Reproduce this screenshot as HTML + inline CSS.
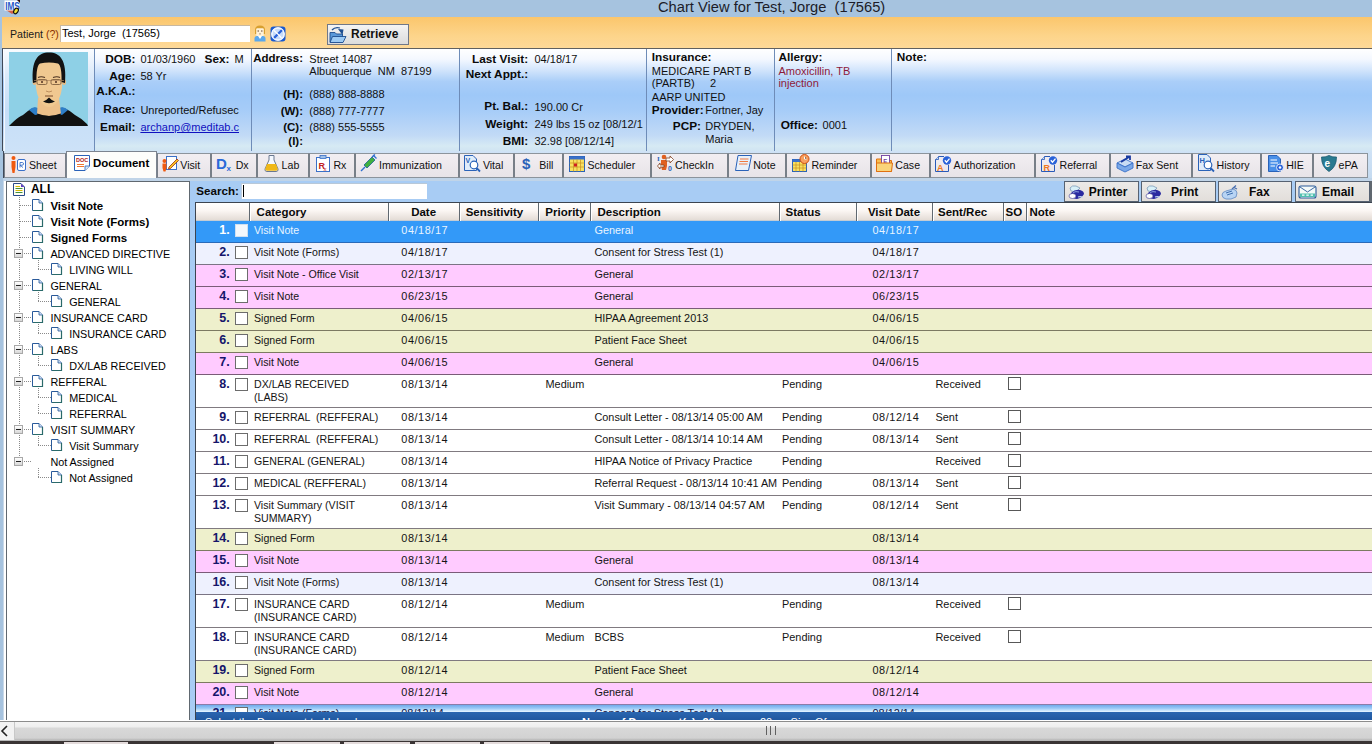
<!DOCTYPE html><html><head><meta charset="utf-8"><style>
*{margin:0;padding:0;box-sizing:border-box}
html,body{width:1372px;height:744px;overflow:hidden}
body{position:relative;background:#A6C3DF;font-family:"Liberation Sans",sans-serif;font-size:11px;color:#000}
.ab{position:absolute}
.t{position:absolute;white-space:pre}
svg{position:absolute;overflow:visible}
</style></head><body>
<div class="ab" style="left:0px;top:0px;width:1372px;height:17px;background:#A6C3DF"></div>
<svg style="left:3px;top:0px" width="18" height="16" viewBox="0 0 18 16"><path d="M3 10 L9 14 L15 10 Z" fill="#D06048"/><rect x="1.5" y="0.5" width="15" height="10" fill="#fff"/><text x="2.2" y="9.6" font-family="Liberation Sans" font-weight="bold" font-size="10.5" fill="#2858C8" transform="scale(0.78,1)" transform-origin="2.2 9.6">IMS</text><path d="M14 0 H17 V3 Z" fill="#301010"/><ellipse cx="13" cy="11" rx="2" ry="3" transform="rotate(35 13 11)" fill="#F0E030" stroke="#101010" stroke-width="1.1"/></svg>
<div class="t" style="left:658px;top:-0.79px;font-size:14.7px;line-height:16px;color:#1C1C28;">Chart View for Test, Jorge  (17565)</div>
<div class="ab" style="left:2px;top:17px;width:1370px;height:31px;background:linear-gradient(#FBC66C,#FDD48A 60%,#FED998)"></div>
<div class="t" style="left:10px;top:25.93px;font-size:10.6px;line-height:16px;color:#1A1A1A;">Patient <span style="color:#8A3000">(?)</span></div>
<div class="ab" style="left:60px;top:25px;width:190px;height:17px;background:#fff;border-top:1px solid #C8B8A0;border-left:1px solid #C8B8A0"></div>
<div class="t" style="left:62px;top:25.39px;font-size:11px;line-height:16px;color:#000;">Test, Jorge  (17565)</div>
<svg style="left:254px;top:25px" width="12" height="17" viewBox="0 0 12 17"><path d="M1 5 Q1 0.5 6 0.5 Q11 0.5 11 5 V9 H1 Z" fill="#D8A030"/><rect x="2.2" y="3.2" width="7.6" height="7.8" rx="1" fill="#FFF2D8"/><path d="M3.5 6 H5 M7 6 H8.5" stroke="#503020" stroke-width="0.9"/><path d="M5 8.5 L6 9.3 L7 8.5" fill="none" stroke="#806040" stroke-width="0.6"/><path d="M0.5 16.5 V13.5 Q0.5 11 3 11 H9 Q11.5 11 11.5 13.5 V16.5 Z" fill="#5AA8EC"/><path d="M4 11 L6 14 L8 11" fill="#fff"/></svg>
<svg style="left:270px;top:26px" width="16" height="16" viewBox="0 0 16 16"><rect x="0.5" y="0.5" width="15" height="15" rx="3" fill="#1A5AD0"/><circle cx="8" cy="8" r="6.2" fill="#C8DCFA" stroke="#F0F6FF" stroke-width="1.2"/><path d="M3.5 12.5 L12.5 3.5" stroke="#2A62D8" stroke-width="2.4"/><path d="M4 4.5 Q8 8 11.5 12" fill="none" stroke="#fff" stroke-width="1.2"/><circle cx="8" cy="8" r="6.2" fill="none" stroke="#F0F6FF" stroke-width="1.2"/></svg>
<div class="ab" style="left:327px;top:24px;width:82px;height:21px;background:linear-gradient(#F4F4F4,#DCDCDC);border:1px solid #707888;"></div>
<svg style="left:329px;top:26px" width="18" height="17" viewBox="0 0 18 17"><path d="M1 6.5 H6 L7.5 8 H13.5 V16 H1 Z" fill="#5A98D8" stroke="#1E4E90" stroke-width="0.9"/><path d="M3.5 10.5 H17 L14 16.5 H1 Z" fill="#9CCAF4" stroke="#1E4E90" stroke-width="0.9"/><path d="M3 4 Q6 0.5 11 2" fill="none" stroke="#1E4E90" stroke-width="1.3"/><path d="M9 3 L14.5 3.5 L13.5 9 Z" fill="#1E4E90"/></svg>
<div class="t" style="left:351px;top:26.34px;font-size:12px;line-height:16px;color:#101010;font-weight:bold;">Retrieve</div>
<div class="ab" style="left:2px;top:48px;width:1370px;height:103px;background:linear-gradient(#FFFFFF 0%,#F4F8FF 10%,#D4E6FC 20%,#AACEF8 32%,#9EC8F8 45%,#A6CCF8 60%,#C2DAF6 85%,#D6EAF4 95%,#D0E4F2 100%);border-top:1px solid #606060;border-left:1px solid #404858"></div>
<div class="ab" style="left:94px;top:49px;width:1px;height:102px;background:#6E8CB8"></div>
<div class="ab" style="left:251px;top:49px;width:1px;height:102px;background:#6E8CB8"></div>
<div class="ab" style="left:459px;top:49px;width:1px;height:102px;background:#6E8CB8"></div>
<div class="ab" style="left:646px;top:49px;width:1px;height:102px;background:#6E8CB8"></div>
<div class="ab" style="left:774px;top:49px;width:1px;height:102px;background:#6E8CB8"></div>
<div class="ab" style="left:891px;top:49px;width:1px;height:102px;background:#6E8CB8"></div>
<div class="ab" style="left:4px;top:49px;width:90px;height:102px;background:linear-gradient(#FAFCFF,#DCEAFA 25%,#C6DEF8 60%,#CDE2F8 100%);border-left:1px solid #F4F8FF"></div>
<svg style="left:9px;top:52px" width="79" height="74" viewBox="0 0 79 74"><rect width="79" height="74" fill="#8ED0E6"/>
<path d="M0 74 L2 72 Q8 66 12 64 L14 63 Q18 59 24 56 Q28 55 31 58 L48 58 Q51 55 55 56 Q62 59 66 63 Q72 66 78 72 L79 74 Z" fill="#111"/>
<path d="M20 58 Q24 54 29 56 L33 62 L26 63 Z" fill="#2E7EC8"/>
<path d="M59 58 Q55 54 50 56 L46 62 L53 63 Z" fill="#2E7EC8"/>
<path d="M29 46 L50 46 L52 62 Q40 66 28 62 Z" fill="#EDC08A"/>
<path d="M28 62 Q40 67 52 62" fill="none" stroke="#111" stroke-width="1.2"/>
<path d="M27 14 Q26 26 27 36 Q29 50 36 54 Q40 56 44 54 Q51 50 53 36 Q54 26 53 14 Q48 9 40 9 Q32 9 27 14 Z" fill="#F0C890"/>
<ellipse cx="25.5" cy="30" rx="2" ry="3" fill="#E8B880"/>
<ellipse cx="55" cy="30" rx="2" ry="3" fill="#E8B880"/>
<path d="M24 31 C22 8 29 0.5 40 0.5 C51 0.5 58 8 56 31 L52.5 30 Q53 14 49 11.5 Q40 9.5 31 11.5 Q27 14 27.5 30 Z" fill="#121212"/><path d="M29 25.5 Q32 24 36 25.5 M44 25.5 Q48 24 51 25.5" stroke="#4A3020" stroke-width="1.1" fill="none"/>
<path d="M25 28.5 H55" stroke="#B08860" stroke-width="0.7"/>
<rect x="28" y="27.5" width="10" height="5" rx="1.5" fill="none" stroke="#806040" stroke-width="0.9"/>
<rect x="42" y="27.5" width="10" height="5" rx="1.5" fill="none" stroke="#806040" stroke-width="0.9"/>
<circle cx="33" cy="30" r="1" fill="#503020"/><circle cx="47" cy="30" r="1" fill="#503020"/>
<path d="M37 39 Q40 41 43 39" fill="none" stroke="#B08050" stroke-width="0.8"/>
<path d="M36 44 H44" stroke="#7A4A2A" stroke-width="1"/>
<path d="M34 49.5 Q38 48 40 45.5 Q42 48 46 49.5 Q40 53 34 49.5 Z" fill="#111"/></svg>
<div class="t" style="left:75.5px;width:60px;text-align:right;top:50.51px;font-size:11.8px;line-height:16px;color:#0A0A0A;font-weight:bold;">DOB:</div>
<div class="t" style="left:140.4px;top:50.79px;font-size:11px;line-height:16px;color:#111;">01/03/1960</div>
<div class="t" style="left:169.5px;width:60px;text-align:right;top:50.51px;font-size:11.8px;line-height:16px;color:#0A0A0A;font-weight:bold;">Sex:</div>
<div class="t" style="left:234.4px;top:50.79px;font-size:11px;line-height:16px;color:#111;">M</div>
<div class="t" style="left:75.5px;width:60px;text-align:right;top:67.71px;font-size:11.8px;line-height:16px;color:#0A0A0A;font-weight:bold;">Age:</div>
<div class="t" style="left:140.4px;top:67.99px;font-size:11px;line-height:16px;color:#111;">58 Yr</div>
<div class="t" style="left:75.5px;width:60px;text-align:right;top:83.41px;font-size:11.8px;line-height:16px;color:#0A0A0A;font-weight:bold;">A.K.A.:</div>
<div class="t" style="left:75.5px;width:60px;text-align:right;top:101.31px;font-size:11.8px;line-height:16px;color:#0A0A0A;font-weight:bold;">Race:</div>
<div class="t" style="left:140.4px;top:101.59px;font-size:11px;line-height:16px;color:#111;">Unreported/Refusec</div>
<div class="t" style="left:75.5px;width:60px;text-align:right;top:119.11px;font-size:11.8px;line-height:16px;color:#0A0A0A;font-weight:bold;">Email:</div>
<div class="t" style="left:140.4px;top:119.39px;font-size:11px;line-height:16px;color:#111;"><span style="color:#1010C0;text-decoration:underline">archanp@meditab.c</span></div>
<div class="t" style="left:223px;width:80px;text-align:right;top:50.42px;font-size:11.5px;line-height:16px;color:#0A0A0A;font-weight:bold;">Address:</div>
<div class="t" style="left:309.3px;top:50.59px;font-size:11px;line-height:16px;color:#111;">Street 14087</div>
<div class="t" style="left:309.3px;top:63.49px;font-size:11px;line-height:16px;color:#111;">Albuquerque  NM  87199</div>
<div class="t" style="left:223px;width:80px;text-align:right;top:85.72px;font-size:11.5px;line-height:16px;color:#0A0A0A;font-weight:bold;">(H):</div>
<div class="t" style="left:309.3px;top:85.89px;font-size:11px;line-height:16px;color:#111;">(888) 888-8888</div>
<div class="t" style="left:223px;width:80px;text-align:right;top:102.62px;font-size:11.5px;line-height:16px;color:#0A0A0A;font-weight:bold;">(W):</div>
<div class="t" style="left:309.3px;top:102.79px;font-size:11px;line-height:16px;color:#111;">(888) 777-7777</div>
<div class="t" style="left:223px;width:80px;text-align:right;top:118.62px;font-size:11.5px;line-height:16px;color:#0A0A0A;font-weight:bold;">(C):</div>
<div class="t" style="left:309.3px;top:118.79px;font-size:11px;line-height:16px;color:#111;">(888) 555-5555</div>
<div class="t" style="left:223px;width:80px;text-align:right;top:133.02px;font-size:11.5px;line-height:16px;color:#0A0A0A;font-weight:bold;">(I):</div>
<div class="t" style="left:438.20000000000005px;width:90px;text-align:right;top:51.01px;font-size:11.8px;line-height:16px;color:#0A0A0A;font-weight:bold;">Last Visit:</div>
<div class="t" style="left:534.5px;top:51.29px;font-size:11px;line-height:16px;color:#111;">04/18/17</div>
<div class="t" style="left:438.20000000000005px;width:90px;text-align:right;top:65.91px;font-size:11.8px;line-height:16px;color:#0A0A0A;font-weight:bold;">Next Appt.:</div>
<div class="t" style="left:438.20000000000005px;width:90px;text-align:right;top:98.41px;font-size:11.8px;line-height:16px;color:#0A0A0A;font-weight:bold;">Pt. Bal.:</div>
<div class="t" style="left:534.5px;top:98.69px;font-size:11px;line-height:16px;color:#111;">190.00 Cr</div>
<div class="t" style="left:438.20000000000005px;width:90px;text-align:right;top:115.61px;font-size:11.8px;line-height:16px;color:#0A0A0A;font-weight:bold;">Weight:</div>
<div class="t" style="left:534.5px;top:115.89px;font-size:11px;line-height:16px;color:#111;">249 lbs 15 oz [08/12/1</div>
<div class="t" style="left:438.20000000000005px;width:90px;text-align:right;top:132.81px;font-size:11.8px;line-height:16px;color:#0A0A0A;font-weight:bold;">BMI:</div>
<div class="t" style="left:534.5px;top:133.09px;font-size:11px;line-height:16px;color:#111;">32.98 [08/12/14]</div>
<div class="t" style="left:651.8px;top:48.61px;font-size:11.8px;line-height:16px;color:#0A0A0A;font-weight:bold;">Insurance:</div>
<div class="t" style="left:651.8px;top:62.69px;font-size:11px;line-height:16px;color:#111;">MEDICARE PART B</div>
<div class="t" style="left:651.8px;top:75.49px;font-size:11px;line-height:16px;color:#111;">(PARTB)     2</div>
<div class="t" style="left:651.8px;top:88.69px;font-size:11px;line-height:16px;color:#111;">AARP UNITED</div>
<div class="t" style="left:651.8px;top:101.81px;font-size:11.8px;line-height:16px;color:#0A0A0A;font-weight:bold;">Provider:</div>
<div class="t" style="left:705.3px;top:102.09px;font-size:11px;line-height:16px;color:#111;">Fortner, Jay</div>
<div class="t" style="left:641px;width:60px;text-align:right;top:117.51px;font-size:11.8px;line-height:16px;color:#0A0A0A;font-weight:bold;">PCP:</div>
<div class="t" style="left:705.3px;top:117.79px;font-size:11px;line-height:16px;color:#111;">DRYDEN,</div>
<div class="t" style="left:705.3px;top:130.59px;font-size:11px;line-height:16px;color:#111;">Maria</div>
<div class="t" style="left:778.4px;top:48.61px;font-size:11.8px;line-height:16px;color:#0A0A0A;font-weight:bold;">Allergy:</div>
<div class="t" style="left:778.4px;top:62.69px;font-size:11px;line-height:16px;color:#8E1A3A;">Amoxicillin, TB</div>
<div class="t" style="left:778.4px;top:75.49px;font-size:11px;line-height:16px;color:#8E1A3A;">injection</div>
<div class="t" style="left:780.7px;top:116.51px;font-size:11.8px;line-height:16px;color:#0A0A0A;font-weight:bold;">Office:</div>
<div class="t" style="left:822.6px;top:116.79px;font-size:11px;line-height:16px;color:#111;">0001</div>
<div class="t" style="left:896.8px;top:48.61px;font-size:11.8px;line-height:16px;color:#0A0A0A;font-weight:bold;">Note:</div>
<div class="ab" style="left:3px;top:151px;width:1369px;height:30px;background:linear-gradient(#CFE2F6,#C4DAF0)"></div>
<div class="ab" style="left:3px;top:151px;width:1px;height:27px;background:#404858"></div>
<div class="ab" style="left:4px;top:153px;width:62px;height:25px;background:linear-gradient(#F2EEF2,#E8E4E8);border:1px solid #8C949C;border-left-color:#787F88;border-right-color:#787F88"></div>
<div class="ab" style="left:157px;top:153px;width:54px;height:25px;background:linear-gradient(#F2EEF2,#E8E4E8);border:1px solid #8C949C;border-left-color:#787F88;border-right-color:#787F88"></div>
<div class="ab" style="left:211px;top:153px;width:46px;height:25px;background:linear-gradient(#F2EEF2,#E8E4E8);border:1px solid #8C949C;border-left-color:#787F88;border-right-color:#787F88"></div>
<div class="ab" style="left:257px;top:153px;width:52px;height:25px;background:linear-gradient(#F2EEF2,#E8E4E8);border:1px solid #8C949C;border-left-color:#787F88;border-right-color:#787F88"></div>
<div class="ab" style="left:309px;top:153px;width:46px;height:25px;background:linear-gradient(#F2EEF2,#E8E4E8);border:1px solid #8C949C;border-left-color:#787F88;border-right-color:#787F88"></div>
<div class="ab" style="left:355px;top:153px;width:104px;height:25px;background:linear-gradient(#F2EEF2,#E8E4E8);border:1px solid #8C949C;border-left-color:#787F88;border-right-color:#787F88"></div>
<div class="ab" style="left:459px;top:153px;width:55px;height:25px;background:linear-gradient(#F2EEF2,#E8E4E8);border:1px solid #8C949C;border-left-color:#787F88;border-right-color:#787F88"></div>
<div class="ab" style="left:514px;top:153px;width:49px;height:25px;background:linear-gradient(#F2EEF2,#E8E4E8);border:1px solid #8C949C;border-left-color:#787F88;border-right-color:#787F88"></div>
<div class="ab" style="left:563px;top:153px;width:88px;height:25px;background:linear-gradient(#F2EEF2,#E8E4E8);border:1px solid #8C949C;border-left-color:#787F88;border-right-color:#787F88"></div>
<div class="ab" style="left:651px;top:153px;width:77px;height:25px;background:linear-gradient(#F2EEF2,#E8E4E8);border:1px solid #8C949C;border-left-color:#787F88;border-right-color:#787F88"></div>
<div class="ab" style="left:728px;top:153px;width:58px;height:25px;background:linear-gradient(#F2EEF2,#E8E4E8);border:1px solid #8C949C;border-left-color:#787F88;border-right-color:#787F88"></div>
<div class="ab" style="left:786px;top:153px;width:85px;height:25px;background:linear-gradient(#F2EEF2,#E8E4E8);border:1px solid #8C949C;border-left-color:#787F88;border-right-color:#787F88"></div>
<div class="ab" style="left:871px;top:153px;width:59px;height:25px;background:linear-gradient(#F2EEF2,#E8E4E8);border:1px solid #8C949C;border-left-color:#787F88;border-right-color:#787F88"></div>
<div class="ab" style="left:930px;top:153px;width:105px;height:25px;background:linear-gradient(#F2EEF2,#E8E4E8);border:1px solid #8C949C;border-left-color:#787F88;border-right-color:#787F88"></div>
<div class="ab" style="left:1035px;top:153px;width:75px;height:25px;background:linear-gradient(#F2EEF2,#E8E4E8);border:1px solid #8C949C;border-left-color:#787F88;border-right-color:#787F88"></div>
<div class="ab" style="left:1110px;top:153px;width:82px;height:25px;background:linear-gradient(#F2EEF2,#E8E4E8);border:1px solid #8C949C;border-left-color:#787F88;border-right-color:#787F88"></div>
<div class="ab" style="left:1192px;top:153px;width:69px;height:25px;background:linear-gradient(#F2EEF2,#E8E4E8);border:1px solid #8C949C;border-left-color:#787F88;border-right-color:#787F88"></div>
<div class="ab" style="left:1261px;top:153px;width:52px;height:25px;background:linear-gradient(#F2EEF2,#E8E4E8);border:1px solid #8C949C;border-left-color:#787F88;border-right-color:#787F88"></div>
<div class="ab" style="left:1313px;top:153px;width:55px;height:25px;background:linear-gradient(#F2EEF2,#E8E4E8);border:1px solid #8C949C;border-left-color:#787F88;border-right-color:#787F88"></div>
<div class="ab" style="left:1367px;top:153px;width:1px;height:25px;background:#8C949C"></div>
<div class="ab" style="left:66px;top:151px;width:91px;height:28px;background:#FDFDFB;border:1px solid #7C8490;border-bottom:none"></div>
<div class="ab" style="left:3px;top:178px;width:1369px;height:3px;background:#C0D4E8"></div>
<div class="ab" style="left:66px;top:178px;width:91px;height:3px;background:#C0D4E8"></div>
<div class="t" style="left:29px;top:156.93px;font-size:10.6px;line-height:16px;color:#101010;">Sheet</div>
<div class="t" style="left:93px;top:154.92px;font-size:11.5px;line-height:16px;color:#000;font-weight:bold;">Document</div>
<div class="t" style="left:180.3px;top:156.93px;font-size:10.6px;line-height:16px;color:#101010;">Visit</div>
<div class="t" style="left:235.7px;top:156.93px;font-size:10.6px;line-height:16px;color:#101010;">Dx</div>
<div class="t" style="left:281.6px;top:156.93px;font-size:10.6px;line-height:16px;color:#101010;">Lab</div>
<div class="t" style="left:333.4px;top:156.93px;font-size:10.6px;line-height:16px;color:#101010;">Rx</div>
<div class="t" style="left:379px;top:156.93px;font-size:10.6px;line-height:16px;color:#101010;">Immunization</div>
<div class="t" style="left:482.9px;top:156.93px;font-size:10.6px;line-height:16px;color:#101010;">Vital</div>
<div class="t" style="left:539.3px;top:156.93px;font-size:10.6px;line-height:16px;color:#101010;">Bill</div>
<div class="t" style="left:587.5px;top:156.93px;font-size:10.6px;line-height:16px;color:#101010;">Scheduler</div>
<div class="t" style="left:675.1px;top:156.93px;font-size:10.6px;line-height:16px;color:#101010;">CheckIn</div>
<div class="t" style="left:753.2px;top:156.93px;font-size:10.6px;line-height:16px;color:#101010;">Note</div>
<div class="t" style="left:811.4px;top:156.93px;font-size:10.6px;line-height:16px;color:#101010;">Reminder</div>
<div class="t" style="left:895.3px;top:156.93px;font-size:10.6px;line-height:16px;color:#101010;">Case</div>
<div class="t" style="left:953.6px;top:156.93px;font-size:10.6px;line-height:16px;color:#101010;">Authorization</div>
<div class="t" style="left:1059.5px;top:156.93px;font-size:10.6px;line-height:16px;color:#101010;">Referral</div>
<div class="t" style="left:1135.7px;top:156.93px;font-size:10.6px;line-height:16px;color:#101010;">Fax Sent</div>
<div class="t" style="left:1216.5px;top:156.93px;font-size:10.6px;line-height:16px;color:#101010;">History</div>
<div class="t" style="left:1286.2px;top:156.93px;font-size:10.6px;line-height:16px;color:#101010;">HIE</div>
<div class="t" style="left:1338.6px;top:156.93px;font-size:10.6px;line-height:16px;color:#101010;">ePA</div>
<svg style="left:11px;top:156px" width="16" height="18" viewBox="0 0 16 18"><circle cx="2.5" cy="2" r="2" fill="#F05A10"/><path d="M0.5 5 H4.5 V11 L3.5 17 H1.5 L0.5 11 Z" fill="#F05A10"/><rect x="6.5" y="3.5" width="8" height="11" rx="1.5" fill="#fff" stroke="#3A70C8" stroke-width="1"/><path d="M9 11.5 V6.5 H11.5 Q12.5 6.5 12.5 8 Q12.5 9.2 11 9.2 H9 L12 11.5" fill="none" stroke="#3A70C8" stroke-width="0.9"/></svg>
<svg style="left:74px;top:155px" width="17" height="17" viewBox="0 0 17 17"><path d="M0.5 0.5 H15.5 V11 L11 15.5 H0.5 Z" fill="#fff" stroke="#2A62B8" stroke-width="1"/><path d="M15.5 11 H11 V15.5" fill="#D8E8F8" stroke="#2A62B8" stroke-width="0.8"/><text x="2" y="7" font-family="Liberation Sans" font-weight="bold" font-size="5.5" fill="#B02020">DOC</text><path d="M3 9.5 H10 M3 11.5 H10" stroke="#F07830" stroke-width="1"/></svg>
<svg style="left:162px;top:155px" width="17" height="17" viewBox="0 0 17 17"><rect x="4.5" y="1.5" width="10" height="13" fill="#fff" stroke="#3A70C8" stroke-width="1"/><circle cx="2.5" cy="6" r="2" fill="#F05A10"/><path d="M0.5 8.5 H4.5 V13 L3.5 16.5 H1.5 L0.5 13 Z" fill="#F05A10"/><path d="M7 12 L15 4 L16.5 5.5 L8.5 13.5 L6.5 14 Z" fill="#F8C020" stroke="#A03010" stroke-width="0.8"/></svg>
<svg style="left:216px;top:156px" width="17" height="16" viewBox="0 0 17 16"><text x="0" y="13" font-family="Liberation Sans" font-weight="bold" font-size="15" fill="#2A6AD8">D</text><text x="10.5" y="15" font-family="Liberation Sans" font-weight="bold" font-size="8" fill="#2A6AD8">x</text></svg>
<svg style="left:264px;top:155px" width="15" height="17" viewBox="0 0 15 17"><path d="M5 0.5 H10 V5 L14 14 Q14.5 16.5 12 16.5 H3 Q0.5 16.5 1 14 L5 5 Z" fill="#F4F8FF" stroke="#6A7890" stroke-width="1"/><path d="M3 9 H12 L13.8 14 Q14 15.8 12 15.8 H3 Q1 15.8 1.2 14 Z" fill="#F0B818"/></svg>
<svg style="left:316px;top:155px" width="15" height="17" viewBox="0 0 15 17"><rect x="0.5" y="2.5" width="13" height="14" fill="#fff" stroke="#3A70C8" stroke-width="1"/><rect x="4" y="0.5" width="6" height="3" fill="#A0C0E8" stroke="#3A70C8" stroke-width="0.8"/><text x="2.5" y="14" font-family="Liberation Sans" font-weight="bold" font-size="9" fill="#C02020">R</text><text x="7.5" y="15.5" font-family="Liberation Sans" font-size="6" fill="#C02020">x</text></svg>
<svg style="left:360px;top:154px" width="17" height="18" viewBox="0 0 17 18"><path d="M1 17 L5 13" stroke="#3070D0" stroke-width="1.5"/><path d="M4 11 L12 3 L15 6 L7 14 Z" fill="#40B040" stroke="#2A6A9A" stroke-width="0.9"/><path d="M12 3 L15 0.5 M13 1 L16.5 4.5" stroke="#3070D0" stroke-width="1.3"/></svg>
<svg style="left:464px;top:155px" width="17" height="17" viewBox="0 0 17 17"><path d="M0.5 0.5 H9 L12.5 4 V15.5 H0.5 Z" fill="#E0ECFA" stroke="#2A62B8" stroke-width="1"/><text x="1.5" y="8" font-family="Liberation Sans" font-weight="bold" font-size="7" fill="#2A62B8">V</text><circle cx="10" cy="10" r="3.8" fill="#fff" stroke="#2A62B8" stroke-width="1.2"/><path d="M12.5 13 L16 16.5" stroke="#2A62B8" stroke-width="1.8"/></svg>
<svg style="left:522px;top:155px" width="13" height="17" viewBox="0 0 13 17"><text x="0" y="14" font-family="Liberation Sans" font-weight="bold" font-size="15" fill="#2A62B8">$</text></svg>
<svg style="left:569px;top:155px" width="16" height="17" viewBox="0 0 16 17"><rect x="0.5" y="1.5" width="15" height="15" fill="#F8E060" stroke="#2A62B8" stroke-width="1"/><rect x="0.5" y="1.5" width="15" height="3" fill="#3A70C8"/><path d="M0.5 8 H15.5 M0.5 12 H15.5 M4.5 4.5 V16.5 M8 4.5 V16.5 M11.5 4.5 V16.5" stroke="#C89020" stroke-width="0.7"/><rect x="5" y="8.5" width="3" height="3" fill="#D02020"/></svg>
<svg style="left:657px;top:154px" width="17" height="18" viewBox="0 0 17 18"><text x="0" y="7" font-family="Liberation Serif" font-weight="bold" font-size="7" fill="#2A62B8">I</text><text x="11" y="17" font-family="Liberation Sans" font-weight="bold" font-size="7" fill="#2A62B8">0</text><circle cx="7" cy="3" r="2.3" fill="#E06020"/><path d="M4 6 H10 V12 L9 16 H5 L4 12 Z" fill="#E06020"/><path d="M9 4 H13 V2 L16.5 5.5 L13 9 V7 H9 Z" fill="#fff" stroke="#804020" stroke-width="0.8"/><path d="M7 13 H3 V15 L0.5 12 L3 9 V11 H7 Z" fill="#fff" stroke="#804020" stroke-width="0.8"/></svg>
<svg style="left:735px;top:155px" width="17" height="17" viewBox="0 0 17 17"><path d="M3 0.5 H16.5 L13.5 15.5 H0.5 Z" fill="#E8F0FA" stroke="#2A62B8" stroke-width="1"/><path d="M5 4 H13.5 M4.5 6.5 H13 M4 9 H12.5" stroke="#F07840" stroke-width="1.1"/></svg>
<svg style="left:792px;top:154px" width="18" height="18" viewBox="0 0 18 18"><rect x="0.5" y="5.5" width="14" height="12" fill="#F8E060" stroke="#2A62B8" stroke-width="1"/><rect x="0.5" y="5.5" width="14" height="2.5" fill="#3A70C8"/><path d="M0.5 11 H14.5 M0.5 14 H14.5 M4 8 V17.5 M7.5 8 V17.5 M11 8 V17.5" stroke="#C89020" stroke-width="0.7"/><circle cx="12.5" cy="5" r="4.5" fill="#F8A060" stroke="#D05010" stroke-width="1"/><path d="M12.5 2.5 V5 H14.5" stroke="#fff" stroke-width="1"/></svg>
<svg style="left:876px;top:155px" width="17" height="17" viewBox="0 0 17 17"><path d="M0.5 4 H6 L7.5 5.5 H15.5 V16.5 H0.5 Z" fill="#F8C050" stroke="#E07010" stroke-width="1"/><rect x="5.5" y="0.5" width="8" height="9" fill="#fff" stroke="#7040A0" stroke-width="0.9"/><text x="7.2" y="7.5" font-family="Liberation Sans" font-weight="bold" font-size="6" fill="#7040A0">E</text><path d="M0.5 8 H16.5 L15.5 16.5 H0.5 Z" fill="#FAD47A" stroke="#E07010" stroke-width="1"/></svg>
<svg style="left:935px;top:156px" width="17" height="17" viewBox="0 0 17 17"><path d="M3.5 0.5 H9 M3.5 0.5 L0.5 3.5 V15.5 H13.5 V9" fill="none" stroke="#2A5AB8" stroke-width="1"/><path d="M0.5 3.5 H3.5 V0.5" fill="#C8DCF8" stroke="#2A5AB8" stroke-width="0.8"/><text x="2" y="14.5" font-family="Liberation Sans" font-weight="bold" font-size="9" fill="#F07820">A</text><circle cx="12" cy="4.5" r="4.2" fill="#2A62D8"/><path d="M9.8 4.3 L11.5 6.2 L14.5 2.6" fill="none" stroke="#fff" stroke-width="1.3"/></svg>
<svg style="left:1041px;top:156px" width="17" height="17" viewBox="0 0 17 17"><path d="M3.5 0.5 H9 M3.5 0.5 L0.5 3.5 V15.5 H13.5 V9" fill="none" stroke="#2A5AB8" stroke-width="1"/><path d="M0.5 3.5 H3.5 V0.5" fill="#C8DCF8" stroke="#2A5AB8" stroke-width="0.8"/><text x="2.5" y="14.5" font-family="Liberation Sans" font-weight="bold" font-size="9" fill="#F07820">R</text><circle cx="12" cy="4.5" r="4.2" fill="#2A62D8"/><path d="M9.8 4.3 L11.5 6.2 L14.5 2.6" fill="none" stroke="#fff" stroke-width="1.3"/></svg>
<svg style="left:1116px;top:155px" width="18" height="18" viewBox="0 0 18 18"><path d="M1 8 L9 4 L17 8 L9 12 Z" fill="#C8DCF4" stroke="#3A70C8" stroke-width="0.9"/><path d="M1 8 V13 L9 17 L17 13 V8 L9 12 Z" fill="#7AA8E8" stroke="#3A70C8" stroke-width="0.9"/><path d="M5 7 L13 2 M10 1.5 H14 V5" fill="none" stroke="#1A3AA0" stroke-width="1.8"/></svg>
<svg style="left:1198px;top:154px" width="17" height="18" viewBox="0 0 17 18"><path d="M0.5 0.5 H9 L12.5 4 V16.5 H0.5 Z" fill="#E0ECFA" stroke="#2A62B8" stroke-width="1"/><text x="1.5" y="8.5" font-family="Liberation Sans" font-weight="bold" font-size="7.5" fill="#2A62B8">H</text><circle cx="10" cy="11" r="3.8" fill="#fff" stroke="#2A62B8" stroke-width="1.2"/><path d="M12.5 14 L16 17.5" stroke="#2A62B8" stroke-width="1.8"/></svg>
<svg style="left:1268px;top:155px" width="16" height="17" viewBox="0 0 16 17"><path d="M0.5 0.5 H9 L12.5 4 V16.5 H0.5 Z" fill="#4A90E8" stroke="#2A62B8" stroke-width="1"/><path d="M2.5 5 H9 M2.5 8 H10 M2.5 11 H7" stroke="#fff" stroke-width="1.2"/><circle cx="12" cy="12.5" r="3.5" fill="#2A62D8" stroke="#fff" stroke-width="0.8"/><circle cx="12" cy="12.5" r="1.3" fill="#fff"/></svg>
<svg style="left:1321px;top:155px" width="16" height="17" viewBox="0 0 16 17"><path d="M8 0.5 Q12 2.5 15.5 2 Q15.5 12 8 16.5 Q0.5 12 0.5 2 Q4 2.5 8 0.5 Z" fill="#2A7A90" stroke="#1A5A70" stroke-width="0.8"/><text x="3.5" y="12" font-family="Liberation Sans" font-weight="bold" font-size="10" fill="#fff">e</text></svg>
<div class="ab" style="left:3px;top:181px;width:187px;height:540px;background:#fff;border-left:1px solid #C8D8E8"></div>
<div class="ab" style="left:6px;top:181px;width:184px;height:540px;background:#fff;border:1px solid #606870;border-bottom:none"></div>
<div class="ab" style="left:190px;top:181px;width:1182px;height:540px;background:#A8CCF4"></div>
<div class="ab" style="left:190px;top:181px;width:5px;height:540px;background:#A8CCF4"></div>
<div class="t" style="left:196.3px;top:182.68px;font-size:11.6px;line-height:16px;color:#0A0A0A;font-weight:bold;">Search:</div>
<div class="ab" style="left:241px;top:183px;width:186px;height:16px;background:#fff;border-left:1px solid #C0D0E0;border-top:1px solid #B8C8D8"></div>
<div class="ab" style="left:243px;top:185px;width:1px;height:12px;background:#000"></div>
<div class="ab" style="left:195px;top:202px;width:1177px;height:519px;background:#fff;border-left:1px solid #3C4450;border-top:1px solid #3C4450"></div>
<div class="ab" style="left:196px;top:203px;width:1176px;height:18px;background:linear-gradient(#FFFFFF,#FBF6F3 45%,#E4DCD6);border-bottom:1px solid #C4CCD4"></div>
<div class="ab" style="left:249px;top:203px;width:1px;height:18px;background:#606870"></div>
<div class="ab" style="left:250px;top:203px;width:1px;height:18px;background:#FFFFFF"></div>
<div class="ab" style="left:388px;top:203px;width:1px;height:18px;background:#606870"></div>
<div class="ab" style="left:389px;top:203px;width:1px;height:18px;background:#FFFFFF"></div>
<div class="ab" style="left:459px;top:203px;width:1px;height:18px;background:#606870"></div>
<div class="ab" style="left:460px;top:203px;width:1px;height:18px;background:#FFFFFF"></div>
<div class="ab" style="left:538px;top:203px;width:1px;height:18px;background:#606870"></div>
<div class="ab" style="left:539px;top:203px;width:1px;height:18px;background:#FFFFFF"></div>
<div class="ab" style="left:590px;top:203px;width:1px;height:18px;background:#606870"></div>
<div class="ab" style="left:591px;top:203px;width:1px;height:18px;background:#FFFFFF"></div>
<div class="ab" style="left:779px;top:203px;width:1px;height:18px;background:#606870"></div>
<div class="ab" style="left:780px;top:203px;width:1px;height:18px;background:#FFFFFF"></div>
<div class="ab" style="left:856px;top:203px;width:1px;height:18px;background:#606870"></div>
<div class="ab" style="left:857px;top:203px;width:1px;height:18px;background:#FFFFFF"></div>
<div class="ab" style="left:932px;top:203px;width:1px;height:18px;background:#606870"></div>
<div class="ab" style="left:933px;top:203px;width:1px;height:18px;background:#FFFFFF"></div>
<div class="ab" style="left:1003px;top:203px;width:1px;height:18px;background:#606870"></div>
<div class="ab" style="left:1004px;top:203px;width:1px;height:18px;background:#FFFFFF"></div>
<div class="ab" style="left:1026px;top:203px;width:1px;height:18px;background:#606870"></div>
<div class="ab" style="left:1027px;top:203px;width:1px;height:18px;background:#FFFFFF"></div>
<div class="t" style="left:256.6px;top:203.52px;font-size:11.5px;line-height:16px;color:#0A0A0A;font-weight:bold;">Category</div>
<div class="t" style="left:383.6px;width:80px;text-align:center;top:203.52px;font-size:11.5px;line-height:16px;color:#0A0A0A;font-weight:bold;">Date</div>
<div class="t" style="left:465.7px;top:203.52px;font-size:11.5px;line-height:16px;color:#0A0A0A;font-weight:bold;">Sensitivity</div>
<div class="t" style="left:545.3px;top:203.52px;font-size:11.5px;line-height:16px;color:#0A0A0A;font-weight:bold;">Priority</div>
<div class="t" style="left:597.5px;top:203.52px;font-size:11.5px;line-height:16px;color:#0A0A0A;font-weight:bold;">Description</div>
<div class="t" style="left:785.5px;top:203.52px;font-size:11.5px;line-height:16px;color:#0A0A0A;font-weight:bold;">Status</div>
<div class="t" style="left:854.0px;width:80px;text-align:center;top:203.52px;font-size:11.5px;line-height:16px;color:#0A0A0A;font-weight:bold;">Visit Date</div>
<div class="t" style="left:938px;top:203.52px;font-size:11.5px;line-height:16px;color:#0A0A0A;font-weight:bold;">Sent/Rec</div>
<div class="t" style="left:1005.5px;top:203.52px;font-size:11.5px;line-height:16px;color:#0A0A0A;font-weight:bold;">SO</div>
<div class="t" style="left:1029.5px;top:203.52px;font-size:11.5px;line-height:16px;color:#0A0A0A;font-weight:bold;">Note</div>
<div class="ab" style="left:196px;top:221px;width:1176px;height:22px;background:#3399F8;border-bottom:1px solid #2A6AB8"></div>
<div class="t" style="left:199.8px;width:30px;text-align:right;top:221.97px;font-size:12.5px;line-height:16px;color:#FFFFFF;font-weight:bold;">1.</div>
<div class="ab" style="left:235px;top:224px;width:13px;height:13px;background:#F4F8FC;border:1px solid #D0E0F0"></div>
<div class="t" style="left:254px;top:222.33px;font-size:10.6px;line-height:16px;color:#E8F4FF;">Visit Note</div>
<div class="t" style="left:401.3px;top:222.22px;font-size:10.9px;line-height:16px;color:#E8F4FF;letter-spacing:0.55px">04/18/17</div>
<div class="t" style="left:594.5px;top:222.24px;font-size:10.85px;line-height:16px;color:#E8F4FF;">General</div>
<div class="t" style="left:872.5px;top:222.22px;font-size:10.9px;line-height:16px;color:#E8F4FF;letter-spacing:0.55px">04/18/17</div>
<div class="ab" style="left:196px;top:243px;width:1176px;height:22px;background:#EEF1FE;border-bottom:1px solid #7A7484"></div>
<div class="t" style="left:199.8px;width:30px;text-align:right;top:243.97px;font-size:12.5px;line-height:16px;color:#15156A;font-weight:bold;">2.</div>
<div class="ab" style="left:235px;top:246px;width:13px;height:13px;background:#fff;border:1px solid #6C6C6C"></div>
<div class="t" style="left:254px;top:244.33px;font-size:10.6px;line-height:16px;color:#141414;">Visit Note (Forms)</div>
<div class="t" style="left:401.3px;top:244.22px;font-size:10.9px;line-height:16px;color:#141414;letter-spacing:0.55px">04/18/17</div>
<div class="t" style="left:594.5px;top:244.24px;font-size:10.85px;line-height:16px;color:#141414;">Consent for Stress Test (1)</div>
<div class="t" style="left:872.5px;top:244.22px;font-size:10.9px;line-height:16px;color:#141414;letter-spacing:0.55px">04/18/17</div>
<div class="ab" style="left:196px;top:265px;width:1176px;height:22px;background:#FFCBFF;border-bottom:1px solid #7A5C78"></div>
<div class="t" style="left:199.8px;width:30px;text-align:right;top:265.97px;font-size:12.5px;line-height:16px;color:#15156A;font-weight:bold;">3.</div>
<div class="ab" style="left:235px;top:268px;width:13px;height:13px;background:#fff;border:1px solid #6C6C6C"></div>
<div class="t" style="left:254px;top:266.33px;font-size:10.6px;line-height:16px;color:#141414;">Visit Note - Office Visit</div>
<div class="t" style="left:401.3px;top:266.22px;font-size:10.9px;line-height:16px;color:#141414;letter-spacing:0.55px">02/13/17</div>
<div class="t" style="left:594.5px;top:266.24px;font-size:10.85px;line-height:16px;color:#141414;">General</div>
<div class="t" style="left:872.5px;top:266.22px;font-size:10.9px;line-height:16px;color:#141414;letter-spacing:0.55px">02/13/17</div>
<div class="ab" style="left:196px;top:287px;width:1176px;height:22px;background:#FFCBFF;border-bottom:1px solid #7A5C78"></div>
<div class="t" style="left:199.8px;width:30px;text-align:right;top:287.97px;font-size:12.5px;line-height:16px;color:#15156A;font-weight:bold;">4.</div>
<div class="ab" style="left:235px;top:290px;width:13px;height:13px;background:#fff;border:1px solid #6C6C6C"></div>
<div class="t" style="left:254px;top:288.33px;font-size:10.6px;line-height:16px;color:#141414;">Visit Note</div>
<div class="t" style="left:401.3px;top:288.22px;font-size:10.9px;line-height:16px;color:#141414;letter-spacing:0.55px">06/23/15</div>
<div class="t" style="left:594.5px;top:288.24px;font-size:10.85px;line-height:16px;color:#141414;">General</div>
<div class="t" style="left:872.5px;top:288.22px;font-size:10.9px;line-height:16px;color:#141414;letter-spacing:0.55px">06/23/15</div>
<div class="ab" style="left:196px;top:309px;width:1176px;height:22px;background:#EEF0CC;border-bottom:1px solid #7C7A62"></div>
<div class="t" style="left:199.8px;width:30px;text-align:right;top:309.97px;font-size:12.5px;line-height:16px;color:#15156A;font-weight:bold;">5.</div>
<div class="ab" style="left:235px;top:312px;width:13px;height:13px;background:#fff;border:1px solid #6C6C6C"></div>
<div class="t" style="left:254px;top:310.33px;font-size:10.6px;line-height:16px;color:#141414;">Signed Form</div>
<div class="t" style="left:401.3px;top:310.22px;font-size:10.9px;line-height:16px;color:#141414;letter-spacing:0.55px">04/06/15</div>
<div class="t" style="left:594.5px;top:310.24px;font-size:10.85px;line-height:16px;color:#141414;">HIPAA Agreement 2013</div>
<div class="t" style="left:872.5px;top:310.22px;font-size:10.9px;line-height:16px;color:#141414;letter-spacing:0.55px">04/06/15</div>
<div class="ab" style="left:196px;top:331px;width:1176px;height:22px;background:#EEF0CC;border-bottom:1px solid #7C7A62"></div>
<div class="t" style="left:199.8px;width:30px;text-align:right;top:331.97px;font-size:12.5px;line-height:16px;color:#15156A;font-weight:bold;">6.</div>
<div class="ab" style="left:235px;top:334px;width:13px;height:13px;background:#fff;border:1px solid #6C6C6C"></div>
<div class="t" style="left:254px;top:332.33px;font-size:10.6px;line-height:16px;color:#141414;">Signed Form</div>
<div class="t" style="left:401.3px;top:332.22px;font-size:10.9px;line-height:16px;color:#141414;letter-spacing:0.55px">04/06/15</div>
<div class="t" style="left:594.5px;top:332.24px;font-size:10.85px;line-height:16px;color:#141414;">Patient Face Sheet</div>
<div class="t" style="left:872.5px;top:332.22px;font-size:10.9px;line-height:16px;color:#141414;letter-spacing:0.55px">04/06/15</div>
<div class="ab" style="left:196px;top:353px;width:1176px;height:22px;background:#FFCBFF;border-bottom:1px solid #7A5C78"></div>
<div class="t" style="left:199.8px;width:30px;text-align:right;top:353.97px;font-size:12.5px;line-height:16px;color:#15156A;font-weight:bold;">7.</div>
<div class="ab" style="left:235px;top:356px;width:13px;height:13px;background:#fff;border:1px solid #6C6C6C"></div>
<div class="t" style="left:254px;top:354.33px;font-size:10.6px;line-height:16px;color:#141414;">Visit Note</div>
<div class="t" style="left:401.3px;top:354.22px;font-size:10.9px;line-height:16px;color:#141414;letter-spacing:0.55px">04/06/15</div>
<div class="t" style="left:594.5px;top:354.24px;font-size:10.85px;line-height:16px;color:#141414;">General</div>
<div class="t" style="left:872.5px;top:354.22px;font-size:10.9px;line-height:16px;color:#141414;letter-spacing:0.55px">04/06/15</div>
<div class="ab" style="left:196px;top:375px;width:1176px;height:33px;background:#FFFFFF;border-bottom:1px solid #807A80"></div>
<div class="t" style="left:199.8px;width:30px;text-align:right;top:375.97px;font-size:12.5px;line-height:16px;color:#15156A;font-weight:bold;">8.</div>
<div class="ab" style="left:235px;top:378px;width:13px;height:13px;background:#fff;border:1px solid #6C6C6C"></div>
<div class="t" style="left:254px;top:376.33px;font-size:10.6px;line-height:16px;color:#141414;">DX/LAB RECEIVED</div>
<div class="t" style="left:254px;top:389.33px;font-size:10.6px;line-height:16px;color:#141414;">(LABS)</div>
<div class="t" style="left:401.3px;top:376.22px;font-size:10.9px;line-height:16px;color:#141414;letter-spacing:0.55px">08/13/14</div>
<div class="t" style="left:545.5px;top:376.22px;font-size:10.9px;line-height:16px;color:#141414;">Medium</div>
<div class="t" style="left:782px;top:376.22px;font-size:10.9px;line-height:16px;color:#141414;">Pending</div>
<div class="t" style="left:935.5px;top:376.22px;font-size:10.9px;line-height:16px;color:#141414;">Received</div>
<div class="ab" style="left:1008px;top:377px;width:13px;height:13px;background:#fff;border:1px solid #585858"></div>
<div class="ab" style="left:196px;top:408px;width:1176px;height:22px;background:#FFFFFF;border-bottom:1px solid #807A80"></div>
<div class="t" style="left:199.8px;width:30px;text-align:right;top:408.97px;font-size:12.5px;line-height:16px;color:#15156A;font-weight:bold;">9.</div>
<div class="ab" style="left:235px;top:411px;width:13px;height:13px;background:#fff;border:1px solid #6C6C6C"></div>
<div class="t" style="left:254px;top:409.33px;font-size:10.6px;line-height:16px;color:#141414;">REFERRAL  (REFFERAL)</div>
<div class="t" style="left:401.3px;top:409.22px;font-size:10.9px;line-height:16px;color:#141414;letter-spacing:0.55px">08/13/14</div>
<div class="t" style="left:594.5px;top:409.24px;font-size:10.85px;line-height:16px;color:#141414;">Consult Letter - 08/13/14 05:00 AM</div>
<div class="t" style="left:782px;top:409.22px;font-size:10.9px;line-height:16px;color:#141414;">Pending</div>
<div class="t" style="left:872.5px;top:409.22px;font-size:10.9px;line-height:16px;color:#141414;letter-spacing:0.55px">08/12/14</div>
<div class="t" style="left:935.5px;top:409.22px;font-size:10.9px;line-height:16px;color:#141414;">Sent</div>
<div class="ab" style="left:1008px;top:410px;width:13px;height:13px;background:#fff;border:1px solid #585858"></div>
<div class="ab" style="left:196px;top:430px;width:1176px;height:22px;background:#FFFFFF;border-bottom:1px solid #807A80"></div>
<div class="t" style="left:199.8px;width:30px;text-align:right;top:430.97px;font-size:12.5px;line-height:16px;color:#15156A;font-weight:bold;">10.</div>
<div class="ab" style="left:235px;top:433px;width:13px;height:13px;background:#fff;border:1px solid #6C6C6C"></div>
<div class="t" style="left:254px;top:431.33px;font-size:10.6px;line-height:16px;color:#141414;">REFERRAL  (REFFERAL)</div>
<div class="t" style="left:401.3px;top:431.22px;font-size:10.9px;line-height:16px;color:#141414;letter-spacing:0.55px">08/13/14</div>
<div class="t" style="left:594.5px;top:431.24px;font-size:10.85px;line-height:16px;color:#141414;">Consult Letter - 08/13/14 10:14 AM</div>
<div class="t" style="left:782px;top:431.22px;font-size:10.9px;line-height:16px;color:#141414;">Pending</div>
<div class="t" style="left:872.5px;top:431.22px;font-size:10.9px;line-height:16px;color:#141414;letter-spacing:0.55px">08/13/14</div>
<div class="t" style="left:935.5px;top:431.22px;font-size:10.9px;line-height:16px;color:#141414;">Sent</div>
<div class="ab" style="left:1008px;top:432px;width:13px;height:13px;background:#fff;border:1px solid #585858"></div>
<div class="ab" style="left:196px;top:452px;width:1176px;height:22px;background:#FFFFFF;border-bottom:1px solid #807A80"></div>
<div class="t" style="left:199.8px;width:30px;text-align:right;top:452.97px;font-size:12.5px;line-height:16px;color:#15156A;font-weight:bold;">11.</div>
<div class="ab" style="left:235px;top:455px;width:13px;height:13px;background:#fff;border:1px solid #6C6C6C"></div>
<div class="t" style="left:254px;top:453.33px;font-size:10.6px;line-height:16px;color:#141414;">GENERAL (GENERAL)</div>
<div class="t" style="left:401.3px;top:453.22px;font-size:10.9px;line-height:16px;color:#141414;letter-spacing:0.55px">08/13/14</div>
<div class="t" style="left:594.5px;top:453.24px;font-size:10.85px;line-height:16px;color:#141414;">HIPAA Notice of Privacy Practice</div>
<div class="t" style="left:782px;top:453.22px;font-size:10.9px;line-height:16px;color:#141414;">Pending</div>
<div class="t" style="left:935.5px;top:453.22px;font-size:10.9px;line-height:16px;color:#141414;">Received</div>
<div class="ab" style="left:1008px;top:454px;width:13px;height:13px;background:#fff;border:1px solid #585858"></div>
<div class="ab" style="left:196px;top:474px;width:1176px;height:22px;background:#FFFFFF;border-bottom:1px solid #807A80"></div>
<div class="t" style="left:199.8px;width:30px;text-align:right;top:474.97px;font-size:12.5px;line-height:16px;color:#15156A;font-weight:bold;">12.</div>
<div class="ab" style="left:235px;top:477px;width:13px;height:13px;background:#fff;border:1px solid #6C6C6C"></div>
<div class="t" style="left:254px;top:475.33px;font-size:10.6px;line-height:16px;color:#141414;">MEDICAL (REFFERAL)</div>
<div class="t" style="left:401.3px;top:475.22px;font-size:10.9px;line-height:16px;color:#141414;letter-spacing:0.55px">08/13/14</div>
<div class="t" style="left:594.5px;top:475.24px;font-size:10.85px;line-height:16px;color:#141414;">Referral Request - 08/13/14 10:41 AM</div>
<div class="t" style="left:782px;top:475.22px;font-size:10.9px;line-height:16px;color:#141414;">Pending</div>
<div class="t" style="left:872.5px;top:475.22px;font-size:10.9px;line-height:16px;color:#141414;letter-spacing:0.55px">08/13/14</div>
<div class="t" style="left:935.5px;top:475.22px;font-size:10.9px;line-height:16px;color:#141414;">Sent</div>
<div class="ab" style="left:1008px;top:476px;width:13px;height:13px;background:#fff;border:1px solid #585858"></div>
<div class="ab" style="left:196px;top:496px;width:1176px;height:33px;background:#FFFFFF;border-bottom:1px solid #807A80"></div>
<div class="t" style="left:199.8px;width:30px;text-align:right;top:496.97px;font-size:12.5px;line-height:16px;color:#15156A;font-weight:bold;">13.</div>
<div class="ab" style="left:235px;top:499px;width:13px;height:13px;background:#fff;border:1px solid #6C6C6C"></div>
<div class="t" style="left:254px;top:497.33px;font-size:10.6px;line-height:16px;color:#141414;">Visit Summary (VISIT</div>
<div class="t" style="left:254px;top:510.33px;font-size:10.6px;line-height:16px;color:#141414;">SUMMARY)</div>
<div class="t" style="left:401.3px;top:497.22px;font-size:10.9px;line-height:16px;color:#141414;letter-spacing:0.55px">08/13/14</div>
<div class="t" style="left:594.5px;top:497.24px;font-size:10.85px;line-height:16px;color:#141414;">Visit Summary - 08/13/14 04:57 AM</div>
<div class="t" style="left:782px;top:497.22px;font-size:10.9px;line-height:16px;color:#141414;">Pending</div>
<div class="t" style="left:872.5px;top:497.22px;font-size:10.9px;line-height:16px;color:#141414;letter-spacing:0.55px">08/12/14</div>
<div class="t" style="left:935.5px;top:497.22px;font-size:10.9px;line-height:16px;color:#141414;">Sent</div>
<div class="ab" style="left:1008px;top:498px;width:13px;height:13px;background:#fff;border:1px solid #585858"></div>
<div class="ab" style="left:196px;top:529px;width:1176px;height:22px;background:#EEF0CC;border-bottom:1px solid #7C7A62"></div>
<div class="t" style="left:199.8px;width:30px;text-align:right;top:529.97px;font-size:12.5px;line-height:16px;color:#15156A;font-weight:bold;">14.</div>
<div class="ab" style="left:235px;top:532px;width:13px;height:13px;background:#fff;border:1px solid #6C6C6C"></div>
<div class="t" style="left:254px;top:530.33px;font-size:10.6px;line-height:16px;color:#141414;">Signed Form</div>
<div class="t" style="left:401.3px;top:530.22px;font-size:10.9px;line-height:16px;color:#141414;letter-spacing:0.55px">08/13/14</div>
<div class="t" style="left:872.5px;top:530.22px;font-size:10.9px;line-height:16px;color:#141414;letter-spacing:0.55px">08/13/14</div>
<div class="ab" style="left:196px;top:551px;width:1176px;height:22px;background:#FFCBFF;border-bottom:1px solid #7A5C78"></div>
<div class="t" style="left:199.8px;width:30px;text-align:right;top:551.97px;font-size:12.5px;line-height:16px;color:#15156A;font-weight:bold;">15.</div>
<div class="ab" style="left:235px;top:554px;width:13px;height:13px;background:#fff;border:1px solid #6C6C6C"></div>
<div class="t" style="left:254px;top:552.33px;font-size:10.6px;line-height:16px;color:#141414;">Visit Note</div>
<div class="t" style="left:401.3px;top:552.22px;font-size:10.9px;line-height:16px;color:#141414;letter-spacing:0.55px">08/13/14</div>
<div class="t" style="left:594.5px;top:552.24px;font-size:10.85px;line-height:16px;color:#141414;">General</div>
<div class="t" style="left:872.5px;top:552.22px;font-size:10.9px;line-height:16px;color:#141414;letter-spacing:0.55px">08/13/14</div>
<div class="ab" style="left:196px;top:573px;width:1176px;height:22px;background:#EEF1FE;border-bottom:1px solid #7A7484"></div>
<div class="t" style="left:199.8px;width:30px;text-align:right;top:573.97px;font-size:12.5px;line-height:16px;color:#15156A;font-weight:bold;">16.</div>
<div class="ab" style="left:235px;top:576px;width:13px;height:13px;background:#fff;border:1px solid #6C6C6C"></div>
<div class="t" style="left:254px;top:574.33px;font-size:10.6px;line-height:16px;color:#141414;">Visit Note (Forms)</div>
<div class="t" style="left:401.3px;top:574.22px;font-size:10.9px;line-height:16px;color:#141414;letter-spacing:0.55px">08/13/14</div>
<div class="t" style="left:594.5px;top:574.24px;font-size:10.85px;line-height:16px;color:#141414;">Consent for Stress Test (1)</div>
<div class="t" style="left:872.5px;top:574.22px;font-size:10.9px;line-height:16px;color:#141414;letter-spacing:0.55px">08/13/14</div>
<div class="ab" style="left:196px;top:595px;width:1176px;height:33px;background:#FFFFFF;border-bottom:1px solid #807A80"></div>
<div class="t" style="left:199.8px;width:30px;text-align:right;top:595.97px;font-size:12.5px;line-height:16px;color:#15156A;font-weight:bold;">17.</div>
<div class="ab" style="left:235px;top:598px;width:13px;height:13px;background:#fff;border:1px solid #6C6C6C"></div>
<div class="t" style="left:254px;top:596.33px;font-size:10.6px;line-height:16px;color:#141414;">INSURANCE CARD</div>
<div class="t" style="left:254px;top:609.33px;font-size:10.6px;line-height:16px;color:#141414;">(INSURANCE CARD)</div>
<div class="t" style="left:401.3px;top:596.22px;font-size:10.9px;line-height:16px;color:#141414;letter-spacing:0.55px">08/12/14</div>
<div class="t" style="left:545.5px;top:596.22px;font-size:10.9px;line-height:16px;color:#141414;">Medium</div>
<div class="t" style="left:782px;top:596.22px;font-size:10.9px;line-height:16px;color:#141414;">Pending</div>
<div class="t" style="left:935.5px;top:596.22px;font-size:10.9px;line-height:16px;color:#141414;">Received</div>
<div class="ab" style="left:1008px;top:597px;width:13px;height:13px;background:#fff;border:1px solid #585858"></div>
<div class="ab" style="left:196px;top:628px;width:1176px;height:33px;background:#FFFFFF;border-bottom:1px solid #807A80"></div>
<div class="t" style="left:199.8px;width:30px;text-align:right;top:628.97px;font-size:12.5px;line-height:16px;color:#15156A;font-weight:bold;">18.</div>
<div class="ab" style="left:235px;top:631px;width:13px;height:13px;background:#fff;border:1px solid #6C6C6C"></div>
<div class="t" style="left:254px;top:629.33px;font-size:10.6px;line-height:16px;color:#141414;">INSURANCE CARD</div>
<div class="t" style="left:254px;top:642.33px;font-size:10.6px;line-height:16px;color:#141414;">(INSURANCE CARD)</div>
<div class="t" style="left:401.3px;top:629.22px;font-size:10.9px;line-height:16px;color:#141414;letter-spacing:0.55px">08/12/14</div>
<div class="t" style="left:545.5px;top:629.22px;font-size:10.9px;line-height:16px;color:#141414;">Medium</div>
<div class="t" style="left:594.5px;top:629.24px;font-size:10.85px;line-height:16px;color:#141414;">BCBS</div>
<div class="t" style="left:782px;top:629.22px;font-size:10.9px;line-height:16px;color:#141414;">Pending</div>
<div class="t" style="left:935.5px;top:629.22px;font-size:10.9px;line-height:16px;color:#141414;">Received</div>
<div class="ab" style="left:1008px;top:630px;width:13px;height:13px;background:#fff;border:1px solid #585858"></div>
<div class="ab" style="left:196px;top:661px;width:1176px;height:22px;background:#EEF0CC;border-bottom:1px solid #7C7A62"></div>
<div class="t" style="left:199.8px;width:30px;text-align:right;top:661.97px;font-size:12.5px;line-height:16px;color:#15156A;font-weight:bold;">19.</div>
<div class="ab" style="left:235px;top:664px;width:13px;height:13px;background:#fff;border:1px solid #6C6C6C"></div>
<div class="t" style="left:254px;top:662.33px;font-size:10.6px;line-height:16px;color:#141414;">Signed Form</div>
<div class="t" style="left:401.3px;top:662.22px;font-size:10.9px;line-height:16px;color:#141414;letter-spacing:0.55px">08/12/14</div>
<div class="t" style="left:594.5px;top:662.24px;font-size:10.85px;line-height:16px;color:#141414;">Patient Face Sheet</div>
<div class="t" style="left:872.5px;top:662.22px;font-size:10.9px;line-height:16px;color:#141414;letter-spacing:0.55px">08/12/14</div>
<div class="ab" style="left:196px;top:683px;width:1176px;height:22px;background:#FFCBFF;border-bottom:1px solid #7A5C78"></div>
<div class="t" style="left:199.8px;width:30px;text-align:right;top:683.97px;font-size:12.5px;line-height:16px;color:#15156A;font-weight:bold;">20.</div>
<div class="ab" style="left:235px;top:686px;width:13px;height:13px;background:#fff;border:1px solid #6C6C6C"></div>
<div class="t" style="left:254px;top:684.33px;font-size:10.6px;line-height:16px;color:#141414;">Visit Note</div>
<div class="t" style="left:401.3px;top:684.22px;font-size:10.9px;line-height:16px;color:#141414;letter-spacing:0.55px">08/12/14</div>
<div class="t" style="left:594.5px;top:684.24px;font-size:10.85px;line-height:16px;color:#141414;">General</div>
<div class="t" style="left:872.5px;top:684.22px;font-size:10.9px;line-height:16px;color:#141414;letter-spacing:0.55px">08/12/14</div>
<div class="ab" style="left:196px;top:705px;width:1176px;height:22px;background:#EEF1FE;border-bottom:1px solid #7A7484"></div>
<div class="t" style="left:199.8px;width:30px;text-align:right;top:705.97px;font-size:12.5px;line-height:16px;color:#15156A;font-weight:bold;">21.</div>
<div class="ab" style="left:235px;top:708px;width:13px;height:13px;background:#fff;border:1px solid #6C6C6C"></div>
<div class="t" style="left:254px;top:706.33px;font-size:10.6px;line-height:16px;color:#141414;">Visit Note (Forms)</div>
<div class="t" style="left:401.3px;top:706.22px;font-size:10.9px;line-height:16px;color:#141414;letter-spacing:0.55px">08/12/14</div>
<div class="t" style="left:594.5px;top:706.24px;font-size:10.85px;line-height:16px;color:#141414;">Consent for Stress Test (1)</div>
<div class="t" style="left:872.5px;top:706.22px;font-size:10.9px;line-height:16px;color:#141414;letter-spacing:0.55px">08/12/14</div>
<div class="ab" style="left:196px;top:704px;width:1176px;height:8px;background:linear-gradient(#8C7CA8 0px,#8C7CA8 1px,#70AAEC 1px,#9CCAF6 55%,#D8EEFF 90%,#E8F6FF);overflow:hidden"></div>
<div class="ab" style="left:196px;top:704px;width:1176px;height:8px;overflow:hidden">
<div class="t" style="left:3.8000000000000114px;width:30px;text-align:right;top:0.67px;font-size:12.5px;line-height:16px;color:#15156A;font-weight:bold;">21.</div>
<div class="ab" style="left:39px;top:3px;width:13px;height:13px;background:#fff;border:1px solid #6C6C6C"></div>
<div class="t" style="left:58px;top:1.33px;font-size:10.6px;line-height:16px;color:#101040;">Visit Note (Forms)</div>
<div class="t" style="left:205.3px;top:1.22px;font-size:10.9px;line-height:16px;color:#101040;">08/12/14</div>
<div class="t" style="left:398.5px;top:1.22px;font-size:10.9px;line-height:16px;color:#101040;">Consent for Stress Test (1)</div>
<div class="t" style="left:676.5px;top:1.22px;font-size:10.9px;line-height:16px;color:#101040;">08/12/14</div>
</div>
<div class="ab" style="left:196px;top:712px;width:1176px;height:8px;background:linear-gradient(#2A66B0,#2058A0);overflow:hidden"></div>
<div class="ab" style="left:196px;top:712px;width:1176px;height:8px;overflow:hidden">
<div class="t" style="left:9px;top:2.19px;font-size:11px;line-height:16px;color:#fff;">Select the Document to Upload</div>
<div class="t" style="left:386px;top:2.19px;font-size:11px;line-height:16px;color:#fff;font-weight:bold;">Name of Document(s): 20</div>
<div class="t" style="left:564px;top:2.19px;font-size:11px;line-height:16px;color:#fff;">20      Size Of</div>
</div>
<div class="ab" style="left:0px;top:720px;width:1372px;height:21px;background:linear-gradient(#FFFFFF 0px,#FFFFFF 1px,#8C8C8C 1px,#8C8C8C 2px,#F4F4F4 2px,#EEEEEE 7px,#D8D8D8 8px,#D2D2D2 18px,#B8B8B8 20px)"></div>
<div class="ab" style="left:0px;top:722px;width:14px;height:18px;background:#F2F2F2"></div>
<svg style="left:1px;top:725px" width="8" height="12" viewBox="0 0 8 12"><path d="M6 1 L1 6 L6 11" fill="none" stroke="#222" stroke-width="1.6"/></svg>
<div class="ab" style="left:14px;top:722px;width:1px;height:18px;background:#C8C8C8"></div>
<div class="ab" style="left:766px;top:726px;width:1px;height:9px;background:#606060"></div>
<div class="ab" style="left:770px;top:726px;width:1px;height:9px;background:#606060"></div>
<div class="ab" style="left:775px;top:726px;width:1px;height:9px;background:#606060"></div>
<div class="ab" style="left:0px;top:741px;width:1372px;height:3px;background:#3A3434"></div>
<div class="ab" style="left:64px;top:742px;width:64px;height:2px;background:#E4DCDC"></div>
<div class="ab" style="left:274px;top:742px;width:66px;height:2px;background:#E4DCDC"></div>
<div class="ab" style="left:344px;top:742px;width:66px;height:2px;background:#E4DCDC"></div>
<div class="ab" style="left:415px;top:742px;width:65px;height:2px;background:#E4DCDC"></div>
<div class="ab" style="left:484px;top:742px;width:66px;height:2px;background:#E4DCDC"></div>
<svg style="left:13px;top:183px" width="12" height="13" viewBox="0 0 12 13"><path d="M0.5 0.5 H8 L11.5 4 V12.5 H0.5 Z" fill="#FFFFF4" stroke="#2A4A8A" stroke-width="1"/><path d="M8 0.5 L11.5 4 H8 Z" fill="#6040C0"/><path d="M2.5 3.5 H7 M2.5 7.5 H9.5" stroke="#D8B800" stroke-width="1"/><path d="M2.5 5.5 H9.5 M2.5 9.5 H9.5" stroke="#409040" stroke-width="1"/></svg>
<div class="t" style="left:30.9px;top:181.34px;font-size:12px;line-height:16px;color:#000;font-weight:bold;">ALL</div>
<div class="ab" style="left:19px;top:197px;width:1px;height:265px;background:repeating-linear-gradient(180deg,#8A8A8A 0 1px,transparent 1px 2px)"></div>
<div class="ab" style="left:20px;top:205px;width:12px;height:1px;background:repeating-linear-gradient(90deg,#8A8A8A 0 1px,transparent 1px 2px)"></div>
<svg style="left:32px;top:199px" width="11" height="12" viewBox="0 0 11 12"><path d="M0.5 0.5 H7 L10.5 4 V11.5 H0.5 Z" fill="#fff" stroke="#2A5A9A" stroke-width="1"/><path d="M7 0.5 V4 H10.5" fill="#C8DCF4" stroke="#2A5A9A" stroke-width="0.8"/><path d="M1 11.5 H10.5 V4" fill="none" stroke="#2A6A6A" stroke-width="1.2"/></svg>
<div class="t" style="left:50.4px;top:197.62px;font-size:11.5px;line-height:16px;color:#000;font-weight:bold;">Visit Note</div>
<div class="ab" style="left:20px;top:221px;width:12px;height:1px;background:repeating-linear-gradient(90deg,#8A8A8A 0 1px,transparent 1px 2px)"></div>
<svg style="left:32px;top:215px" width="11" height="12" viewBox="0 0 11 12"><path d="M0.5 0.5 H7 L10.5 4 V11.5 H0.5 Z" fill="#fff" stroke="#2A5A9A" stroke-width="1"/><path d="M7 0.5 V4 H10.5" fill="#C8DCF4" stroke="#2A5A9A" stroke-width="0.8"/><path d="M1 11.5 H10.5 V4" fill="none" stroke="#2A6A6A" stroke-width="1.2"/></svg>
<div class="t" style="left:50.4px;top:213.62px;font-size:11.5px;line-height:16px;color:#000;font-weight:bold;">Visit Note (Forms)</div>
<div class="ab" style="left:20px;top:237px;width:12px;height:1px;background:repeating-linear-gradient(90deg,#8A8A8A 0 1px,transparent 1px 2px)"></div>
<svg style="left:32px;top:231px" width="11" height="12" viewBox="0 0 11 12"><path d="M0.5 0.5 H7 L10.5 4 V11.5 H0.5 Z" fill="#fff" stroke="#2A5A9A" stroke-width="1"/><path d="M7 0.5 V4 H10.5" fill="#C8DCF4" stroke="#2A5A9A" stroke-width="0.8"/><path d="M1 11.5 H10.5 V4" fill="none" stroke="#2A6A6A" stroke-width="1.2"/></svg>
<div class="t" style="left:50.4px;top:229.62px;font-size:11.5px;line-height:16px;color:#000;font-weight:bold;">Signed Forms</div>
<div class="ab" style="left:14px;top:249px;width:9px;height:9px;background:linear-gradient(#FFFFFF,#D8D8D8);border:1px solid #A8A8A8"></div>
<div class="ab" style="left:16px;top:253px;width:5px;height:1px;background:#202020"></div>
<div class="ab" style="left:24px;top:253px;width:8px;height:1px;background:repeating-linear-gradient(90deg,#8A8A8A 0 1px,transparent 1px 2px)"></div>
<svg style="left:32px;top:247px" width="11" height="12" viewBox="0 0 11 12"><path d="M0.5 0.5 H7 L10.5 4 V11.5 H0.5 Z" fill="#fff" stroke="#2A5A9A" stroke-width="1"/><path d="M7 0.5 V4 H10.5" fill="#C8DCF4" stroke="#2A5A9A" stroke-width="0.8"/><path d="M1 11.5 H10.5 V4" fill="none" stroke="#2A6A6A" stroke-width="1.2"/></svg>
<div class="t" style="left:50.4px;top:245.86px;font-size:10.8px;line-height:16px;color:#000;">ADVANCED DIRECTIVE</div>
<div class="ab" style="left:38px;top:269px;width:13px;height:1px;background:repeating-linear-gradient(90deg,#8A8A8A 0 1px,transparent 1px 2px)"></div>
<div class="ab" style="left:38px;top:260px;width:1px;height:9px;background:repeating-linear-gradient(180deg,#8A8A8A 0 1px,transparent 1px 2px)"></div>
<svg style="left:51px;top:263px" width="11" height="12" viewBox="0 0 11 12"><path d="M0.5 0.5 H7 L10.5 4 V11.5 H0.5 Z" fill="#fff" stroke="#2A5A9A" stroke-width="1"/><path d="M7 0.5 V4 H10.5" fill="#C8DCF4" stroke="#2A5A9A" stroke-width="0.8"/><path d="M1 11.5 H10.5 V4" fill="none" stroke="#2A6A6A" stroke-width="1.2"/></svg>
<div class="t" style="left:69.2px;top:261.86px;font-size:10.8px;line-height:16px;color:#000;">LIVING WILL</div>
<div class="ab" style="left:14px;top:281px;width:9px;height:9px;background:linear-gradient(#FFFFFF,#D8D8D8);border:1px solid #A8A8A8"></div>
<div class="ab" style="left:16px;top:285px;width:5px;height:1px;background:#202020"></div>
<div class="ab" style="left:24px;top:285px;width:8px;height:1px;background:repeating-linear-gradient(90deg,#8A8A8A 0 1px,transparent 1px 2px)"></div>
<svg style="left:32px;top:279px" width="11" height="12" viewBox="0 0 11 12"><path d="M0.5 0.5 H7 L10.5 4 V11.5 H0.5 Z" fill="#fff" stroke="#2A5A9A" stroke-width="1"/><path d="M7 0.5 V4 H10.5" fill="#C8DCF4" stroke="#2A5A9A" stroke-width="0.8"/><path d="M1 11.5 H10.5 V4" fill="none" stroke="#2A6A6A" stroke-width="1.2"/></svg>
<div class="t" style="left:50.4px;top:277.86px;font-size:10.8px;line-height:16px;color:#000;">GENERAL</div>
<div class="ab" style="left:38px;top:301px;width:13px;height:1px;background:repeating-linear-gradient(90deg,#8A8A8A 0 1px,transparent 1px 2px)"></div>
<div class="ab" style="left:38px;top:292px;width:1px;height:9px;background:repeating-linear-gradient(180deg,#8A8A8A 0 1px,transparent 1px 2px)"></div>
<svg style="left:51px;top:295px" width="11" height="12" viewBox="0 0 11 12"><path d="M0.5 0.5 H7 L10.5 4 V11.5 H0.5 Z" fill="#fff" stroke="#2A5A9A" stroke-width="1"/><path d="M7 0.5 V4 H10.5" fill="#C8DCF4" stroke="#2A5A9A" stroke-width="0.8"/><path d="M1 11.5 H10.5 V4" fill="none" stroke="#2A6A6A" stroke-width="1.2"/></svg>
<div class="t" style="left:69.2px;top:293.86px;font-size:10.8px;line-height:16px;color:#000;">GENERAL</div>
<div class="ab" style="left:14px;top:313px;width:9px;height:9px;background:linear-gradient(#FFFFFF,#D8D8D8);border:1px solid #A8A8A8"></div>
<div class="ab" style="left:16px;top:317px;width:5px;height:1px;background:#202020"></div>
<div class="ab" style="left:24px;top:317px;width:8px;height:1px;background:repeating-linear-gradient(90deg,#8A8A8A 0 1px,transparent 1px 2px)"></div>
<svg style="left:32px;top:311px" width="11" height="12" viewBox="0 0 11 12"><path d="M0.5 0.5 H7 L10.5 4 V11.5 H0.5 Z" fill="#fff" stroke="#2A5A9A" stroke-width="1"/><path d="M7 0.5 V4 H10.5" fill="#C8DCF4" stroke="#2A5A9A" stroke-width="0.8"/><path d="M1 11.5 H10.5 V4" fill="none" stroke="#2A6A6A" stroke-width="1.2"/></svg>
<div class="t" style="left:50.4px;top:309.86px;font-size:10.8px;line-height:16px;color:#000;">INSURANCE CARD</div>
<div class="ab" style="left:38px;top:333px;width:13px;height:1px;background:repeating-linear-gradient(90deg,#8A8A8A 0 1px,transparent 1px 2px)"></div>
<div class="ab" style="left:38px;top:324px;width:1px;height:9px;background:repeating-linear-gradient(180deg,#8A8A8A 0 1px,transparent 1px 2px)"></div>
<svg style="left:51px;top:327px" width="11" height="12" viewBox="0 0 11 12"><path d="M0.5 0.5 H7 L10.5 4 V11.5 H0.5 Z" fill="#fff" stroke="#2A5A9A" stroke-width="1"/><path d="M7 0.5 V4 H10.5" fill="#C8DCF4" stroke="#2A5A9A" stroke-width="0.8"/><path d="M1 11.5 H10.5 V4" fill="none" stroke="#2A6A6A" stroke-width="1.2"/></svg>
<div class="t" style="left:69.2px;top:325.86px;font-size:10.8px;line-height:16px;color:#000;">INSURANCE CARD</div>
<div class="ab" style="left:14px;top:345px;width:9px;height:9px;background:linear-gradient(#FFFFFF,#D8D8D8);border:1px solid #A8A8A8"></div>
<div class="ab" style="left:16px;top:349px;width:5px;height:1px;background:#202020"></div>
<div class="ab" style="left:24px;top:349px;width:8px;height:1px;background:repeating-linear-gradient(90deg,#8A8A8A 0 1px,transparent 1px 2px)"></div>
<svg style="left:32px;top:343px" width="11" height="12" viewBox="0 0 11 12"><path d="M0.5 0.5 H7 L10.5 4 V11.5 H0.5 Z" fill="#fff" stroke="#2A5A9A" stroke-width="1"/><path d="M7 0.5 V4 H10.5" fill="#C8DCF4" stroke="#2A5A9A" stroke-width="0.8"/><path d="M1 11.5 H10.5 V4" fill="none" stroke="#2A6A6A" stroke-width="1.2"/></svg>
<div class="t" style="left:50.4px;top:341.86px;font-size:10.8px;line-height:16px;color:#000;">LABS</div>
<div class="ab" style="left:38px;top:365px;width:13px;height:1px;background:repeating-linear-gradient(90deg,#8A8A8A 0 1px,transparent 1px 2px)"></div>
<div class="ab" style="left:38px;top:356px;width:1px;height:9px;background:repeating-linear-gradient(180deg,#8A8A8A 0 1px,transparent 1px 2px)"></div>
<svg style="left:51px;top:359px" width="11" height="12" viewBox="0 0 11 12"><path d="M0.5 0.5 H7 L10.5 4 V11.5 H0.5 Z" fill="#fff" stroke="#2A5A9A" stroke-width="1"/><path d="M7 0.5 V4 H10.5" fill="#C8DCF4" stroke="#2A5A9A" stroke-width="0.8"/><path d="M1 11.5 H10.5 V4" fill="none" stroke="#2A6A6A" stroke-width="1.2"/></svg>
<div class="t" style="left:69.2px;top:357.86px;font-size:10.8px;line-height:16px;color:#000;">DX/LAB RECEIVED</div>
<div class="ab" style="left:14px;top:377px;width:9px;height:9px;background:linear-gradient(#FFFFFF,#D8D8D8);border:1px solid #A8A8A8"></div>
<div class="ab" style="left:16px;top:381px;width:5px;height:1px;background:#202020"></div>
<div class="ab" style="left:24px;top:381px;width:8px;height:1px;background:repeating-linear-gradient(90deg,#8A8A8A 0 1px,transparent 1px 2px)"></div>
<svg style="left:32px;top:375px" width="11" height="12" viewBox="0 0 11 12"><path d="M0.5 0.5 H7 L10.5 4 V11.5 H0.5 Z" fill="#fff" stroke="#2A5A9A" stroke-width="1"/><path d="M7 0.5 V4 H10.5" fill="#C8DCF4" stroke="#2A5A9A" stroke-width="0.8"/><path d="M1 11.5 H10.5 V4" fill="none" stroke="#2A6A6A" stroke-width="1.2"/></svg>
<div class="t" style="left:50.4px;top:373.86px;font-size:10.8px;line-height:16px;color:#000;">REFFERAL</div>
<div class="ab" style="left:38px;top:397px;width:13px;height:1px;background:repeating-linear-gradient(90deg,#8A8A8A 0 1px,transparent 1px 2px)"></div>
<div class="ab" style="left:38px;top:388px;width:1px;height:9px;background:repeating-linear-gradient(180deg,#8A8A8A 0 1px,transparent 1px 2px)"></div>
<svg style="left:51px;top:391px" width="11" height="12" viewBox="0 0 11 12"><path d="M0.5 0.5 H7 L10.5 4 V11.5 H0.5 Z" fill="#fff" stroke="#2A5A9A" stroke-width="1"/><path d="M7 0.5 V4 H10.5" fill="#C8DCF4" stroke="#2A5A9A" stroke-width="0.8"/><path d="M1 11.5 H10.5 V4" fill="none" stroke="#2A6A6A" stroke-width="1.2"/></svg>
<div class="t" style="left:69.2px;top:389.86px;font-size:10.8px;line-height:16px;color:#000;">MEDICAL</div>
<div class="ab" style="left:38px;top:413px;width:13px;height:1px;background:repeating-linear-gradient(90deg,#8A8A8A 0 1px,transparent 1px 2px)"></div>
<div class="ab" style="left:38px;top:404px;width:1px;height:9px;background:repeating-linear-gradient(180deg,#8A8A8A 0 1px,transparent 1px 2px)"></div>
<svg style="left:51px;top:407px" width="11" height="12" viewBox="0 0 11 12"><path d="M0.5 0.5 H7 L10.5 4 V11.5 H0.5 Z" fill="#fff" stroke="#2A5A9A" stroke-width="1"/><path d="M7 0.5 V4 H10.5" fill="#C8DCF4" stroke="#2A5A9A" stroke-width="0.8"/><path d="M1 11.5 H10.5 V4" fill="none" stroke="#2A6A6A" stroke-width="1.2"/></svg>
<div class="t" style="left:69.2px;top:405.86px;font-size:10.8px;line-height:16px;color:#000;">REFERRAL</div>
<div class="ab" style="left:14px;top:425px;width:9px;height:9px;background:linear-gradient(#FFFFFF,#D8D8D8);border:1px solid #A8A8A8"></div>
<div class="ab" style="left:16px;top:429px;width:5px;height:1px;background:#202020"></div>
<div class="ab" style="left:24px;top:429px;width:8px;height:1px;background:repeating-linear-gradient(90deg,#8A8A8A 0 1px,transparent 1px 2px)"></div>
<svg style="left:32px;top:423px" width="11" height="12" viewBox="0 0 11 12"><path d="M0.5 0.5 H7 L10.5 4 V11.5 H0.5 Z" fill="#fff" stroke="#2A5A9A" stroke-width="1"/><path d="M7 0.5 V4 H10.5" fill="#C8DCF4" stroke="#2A5A9A" stroke-width="0.8"/><path d="M1 11.5 H10.5 V4" fill="none" stroke="#2A6A6A" stroke-width="1.2"/></svg>
<div class="t" style="left:50.4px;top:421.86px;font-size:10.8px;line-height:16px;color:#000;">VISIT SUMMARY</div>
<div class="ab" style="left:38px;top:445px;width:13px;height:1px;background:repeating-linear-gradient(90deg,#8A8A8A 0 1px,transparent 1px 2px)"></div>
<div class="ab" style="left:38px;top:436px;width:1px;height:9px;background:repeating-linear-gradient(180deg,#8A8A8A 0 1px,transparent 1px 2px)"></div>
<svg style="left:51px;top:439px" width="11" height="12" viewBox="0 0 11 12"><path d="M0.5 0.5 H7 L10.5 4 V11.5 H0.5 Z" fill="#fff" stroke="#2A5A9A" stroke-width="1"/><path d="M7 0.5 V4 H10.5" fill="#C8DCF4" stroke="#2A5A9A" stroke-width="0.8"/><path d="M1 11.5 H10.5 V4" fill="none" stroke="#2A6A6A" stroke-width="1.2"/></svg>
<div class="t" style="left:69.2px;top:437.86px;font-size:10.8px;line-height:16px;color:#000;">Visit Summary</div>
<div class="ab" style="left:14px;top:457px;width:9px;height:9px;background:linear-gradient(#FFFFFF,#D8D8D8);border:1px solid #A8A8A8"></div>
<div class="ab" style="left:16px;top:461px;width:5px;height:1px;background:#202020"></div>
<div class="ab" style="left:24px;top:461px;width:8px;height:1px;background:repeating-linear-gradient(90deg,#8A8A8A 0 1px,transparent 1px 2px)"></div>
<div class="t" style="left:50.4px;top:453.86px;font-size:10.8px;line-height:16px;color:#000;">Not Assigned</div>
<div class="ab" style="left:38px;top:477px;width:13px;height:1px;background:repeating-linear-gradient(90deg,#8A8A8A 0 1px,transparent 1px 2px)"></div>
<div class="ab" style="left:38px;top:468px;width:1px;height:9px;background:repeating-linear-gradient(180deg,#8A8A8A 0 1px,transparent 1px 2px)"></div>
<svg style="left:51px;top:471px" width="11" height="12" viewBox="0 0 11 12"><path d="M0.5 0.5 H7 L10.5 4 V11.5 H0.5 Z" fill="#fff" stroke="#2A5A9A" stroke-width="1"/><path d="M7 0.5 V4 H10.5" fill="#C8DCF4" stroke="#2A5A9A" stroke-width="0.8"/><path d="M1 11.5 H10.5 V4" fill="none" stroke="#2A6A6A" stroke-width="1.2"/></svg>
<div class="t" style="left:69.2px;top:469.86px;font-size:10.8px;line-height:16px;color:#000;">Not Assigned</div>
<div class="ab" style="left:1050px;top:181px;width:322px;height:21px;background:#A8CCF4"></div>
<div class="ab" style="left:1064px;top:181px;width:75px;height:21px;background:linear-gradient(#ECEAE8,#E2DEDA);border:1px solid #566272"></div>
<svg style="left:1067px;top:184px" width="19" height="16" viewBox="0 0 19 16"><path d="M3 4 Q5 1 9 2 L13 4 L9 8 L4 7 Z" fill="#D8F0F8" stroke="#7090B0" stroke-width="0.7"/><path d="M4 9 Q8 5 13 6 Q17 7 17 10 Q15 14 10 15 Q6 15 4 12 Z" fill="#2A2AA0"/><path d="M6 8.5 Q9 7 12 8" fill="none" stroke="#8AA0E0" stroke-width="1"/><ellipse cx="5.5" cy="12" rx="3.5" ry="2.5" fill="#fff" stroke="#303090" stroke-width="0.6"/><path d="M11 13 Q14 12 15.5 13.5" fill="none" stroke="#C0D8F0" stroke-width="1.2"/></svg>
<div class="t" style="left:1088.7px;top:183.64px;font-size:12px;line-height:16px;color:#0A0A0A;font-weight:bold;">Printer</div>
<div class="ab" style="left:1141px;top:181px;width:75px;height:21px;background:linear-gradient(#ECEAE8,#E2DEDA);border:1px solid #566272"></div>
<svg style="left:1144px;top:184px" width="19" height="16" viewBox="0 0 19 16"><path d="M3 4 Q5 1 9 2 L13 4 L9 8 L4 7 Z" fill="#D8F0F8" stroke="#7090B0" stroke-width="0.7"/><path d="M4 9 Q8 5 13 6 Q17 7 17 10 Q15 14 10 15 Q6 15 4 12 Z" fill="#2A2AA0"/><path d="M6 8.5 Q9 7 12 8" fill="none" stroke="#8AA0E0" stroke-width="1"/><ellipse cx="5.5" cy="12" rx="3.5" ry="2.5" fill="#fff" stroke="#303090" stroke-width="0.6"/><path d="M11 13 Q14 12 15.5 13.5" fill="none" stroke="#C0D8F0" stroke-width="1.2"/></svg>
<div class="t" style="left:1171px;top:183.64px;font-size:12px;line-height:16px;color:#0A0A0A;font-weight:bold;">Print</div>
<div class="ab" style="left:1218px;top:181px;width:74px;height:21px;background:linear-gradient(#ECEAE8,#E2DEDA);border:1px solid #566272"></div>
<svg style="left:1221px;top:184px" width="19" height="16" viewBox="0 0 19 16"><path d="M1 11 Q1 8 5 7 L12 5 Q16 6 16 9 L15 13 Q10 16 5 15 Q1 14 1 11 Z" fill="#B8D4F4" stroke="#6088C0" stroke-width="0.8"/><path d="M5 9 L11 7 M6 11 L12 9" stroke="#4070B0" stroke-width="1"/><path d="M11 5 L15 1.5 M13 3.5 L16 5" stroke="#4A70B0" stroke-width="1.3"/></svg>
<div class="t" style="left:1249px;top:183.64px;font-size:12px;line-height:16px;color:#0A0A0A;font-weight:bold;">Fax</div>
<div class="ab" style="left:1295px;top:181px;width:75px;height:21px;background:linear-gradient(#ECEAE8,#E2DEDA);border:1px solid #566272"></div>
<svg style="left:1298px;top:184px" width="19" height="16" viewBox="0 0 19 16"><rect x="1" y="2" width="17" height="12" rx="2" fill="#F4FAF8" stroke="#2A5A9A" stroke-width="1.1"/><path d="M2 3 L9.5 8 L17 3" fill="none" stroke="#2A5A9A" stroke-width="0.9"/><rect x="2" y="9.5" width="15" height="3.5" fill="#50C0B0"/><path d="M4 11.2 H6.5 M8.3 11.2 H10.8 M12.6 11.2 H15" stroke="#fff" stroke-width="1.2"/></svg>
<div class="t" style="left:1322px;top:183.64px;font-size:12px;line-height:16px;color:#0A0A0A;font-weight:bold;">Email</div>
<div class="ab" style="left:1370px;top:181px;width:2px;height:21px;background:#606870"></div>
</body></html>
